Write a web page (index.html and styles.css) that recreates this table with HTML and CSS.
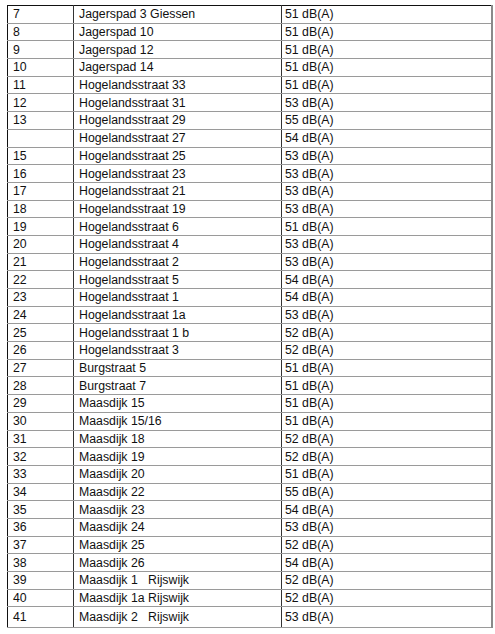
FILE: index.html
```html
<!DOCTYPE html>
<html>
<head>
<meta charset="utf-8">
<link rel="stylesheet" href="styles.css">
</head>
<body>
<table class="grid">
<colgroup><col class="c-nr"><col class="c-addr"><col class="c-db"></colgroup>
<tbody>
<tr><td>7</td><td>Jagerspad 3 Giessen</td><td>51 dB(A)</td></tr>
<tr><td>8</td><td>Jagerspad 10</td><td>51 dB(A)</td></tr>
<tr><td>9</td><td>Jagerspad 12</td><td>51 dB(A)</td></tr>
<tr><td>10</td><td>Jagerspad 14</td><td>51 dB(A)</td></tr>
<tr><td>11</td><td>Hogelandsstraat 33</td><td>51 dB(A)</td></tr>
<tr><td>12</td><td>Hogelandsstraat 31</td><td>53 dB(A)</td></tr>
<tr><td>13</td><td>Hogelandsstraat 29</td><td>55 dB(A)</td></tr>
<tr><td></td><td>Hogelandsstraat 27</td><td>54 dB(A)</td></tr>
<tr><td>15</td><td>Hogelandsstraat 25</td><td>53 dB(A)</td></tr>
<tr><td>16</td><td>Hogelandsstraat 23</td><td>53 dB(A)</td></tr>
<tr><td>17</td><td>Hogelandsstraat 21</td><td>53 dB(A)</td></tr>
<tr><td>18</td><td>Hogelandsstraat 19</td><td>53 dB(A)</td></tr>
<tr><td>19</td><td>Hogelandsstraat 6</td><td>51 dB(A)</td></tr>
<tr><td>20</td><td>Hogelandsstraat 4</td><td>53 dB(A)</td></tr>
<tr><td>21</td><td>Hogelandsstraat 2</td><td>53 dB(A)</td></tr>
<tr><td>22</td><td>Hogelandsstraat 5</td><td>54 dB(A)</td></tr>
<tr><td>23</td><td>Hogelandsstraat 1</td><td>54 dB(A)</td></tr>
<tr><td>24</td><td>Hogelandsstraat 1a</td><td>53 dB(A)</td></tr>
<tr><td>25</td><td>Hogelandsstraat 1 b</td><td>52 dB(A)</td></tr>
<tr><td>26</td><td>Hogelandsstraat 3</td><td>52 dB(A)</td></tr>
<tr><td>27</td><td>Burgstraat 5</td><td>51 dB(A)</td></tr>
<tr><td>28</td><td>Burgstraat 7</td><td>51 dB(A)</td></tr>
<tr><td>29</td><td>Maasdijk 15</td><td>51 dB(A)</td></tr>
<tr><td>30</td><td>Maasdijk 15/16</td><td>51 dB(A)</td></tr>
<tr><td>31</td><td>Maasdijk 18</td><td>52 dB(A)</td></tr>
<tr><td>32</td><td>Maasdijk 19</td><td>52 dB(A)</td></tr>
<tr><td>33</td><td>Maasdijk 20</td><td>51 dB(A)</td></tr>
<tr><td>34</td><td>Maasdijk 22</td><td>55 dB(A)</td></tr>
<tr><td>35</td><td>Maasdijk 23</td><td>54 dB(A)</td></tr>
<tr><td>36</td><td>Maasdijk 24</td><td>53 dB(A)</td></tr>
<tr><td>37</td><td>Maasdijk 25</td><td>52 dB(A)</td></tr>
<tr><td>38</td><td>Maasdijk 26</td><td>54 dB(A)</td></tr>
<tr><td>39</td><td class="pre">Maasdijk 1   Rijswijk</td><td>52 dB(A)</td></tr>
<tr><td>40</td><td>Maasdijk 1a Rijswijk</td><td>52 dB(A)</td></tr>
<tr class="last"><td>41</td><td class="pre">Maasdijk 2   Rijswijk</td><td>53 dB(A)</td></tr>
</tbody>
</table>
</body>
</html>
```

FILE: styles.css
```css
html, body {
  margin: 0;
  padding: 0;
  background: #ffffff;
}

body {
  font-family: "Liberation Sans", Arial, sans-serif;
  font-size: 12.3px;
  color: #111111;
}

.grid {
  margin: 5px 0 0 7px;
  width: 484px;
  border-collapse: collapse;
  table-layout: fixed;
  border-top: 1px solid #111;
  border-left: 1px solid #111;
  border-right: 2px solid #8a8a8a;
  border-bottom: 1px solid #444;
}

.c-nr { width: 66px; }
.c-addr { width: 208px; }
.c-db { width: 210px; }

.grid td {
  height: 16.7px;
  padding: 0 0 0 5px;
  line-height: 14px;
  vertical-align: middle;
  border-bottom: 1px solid #9a9a9a;
  border-right: 1px solid #333;
  white-space: nowrap;
}

.grid td:last-child {
  padding-left: 3px;
  border-right: 2px solid #8a8a8a;
}

.grid td.pre {
  white-space: pre;
}

.grid tr.last td {
  height: 20px;
}
```
